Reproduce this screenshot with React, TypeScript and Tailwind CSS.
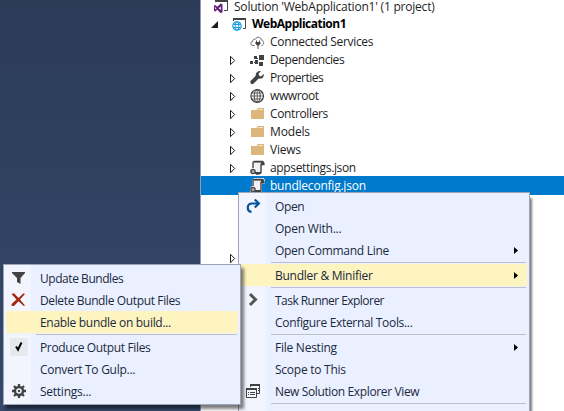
import React from "react";

type IconProps = { className?: string };

const svg = (children: React.ReactNode, w = 16, h = 16) => (
  <svg width={w} height={h} viewBox={`0 0 ${w} ${h}`} className="block shrink-0">
    {children}
  </svg>
);

const SolutionIcon = () =>
  svg(
    <>
      <path d="M1.500 3V.5h12v11H10" fill="none" stroke="#424242" />
      <path d="M1 0h13v3H1z" fill="#424242" />
      <path d="M0 6.500 1.300 6l2 1.800L6.700 4.500 8.500 5.300v8L6.700 14.200 3.300 10.800 1.300 12.500 0 12zM1.200 8v2.600L2.500 9.300zM4.800 9.300 6.800 11V7.600z" fill="#68217a" fillRule="evenodd" />
    </>,
  );

const ProjectIcon = () =>
  svg(
    <>
      <path d="M1.500 5V2.500h12v10H11" fill="none" stroke="#424242" />
      <path d="M1 2h13v2H1z" fill="#424242" />
      <circle cx="5" cy="10" r="5.200" fill="#fff" />
      <circle cx="5" cy="10" r="4.200" fill="none" stroke="#1ba1e2" strokeWidth="1.200" />
      <ellipse cx="5" cy="10" rx="1.900" ry="4.200" fill="none" stroke="#1ba1e2" />
      <path d="M1.400 8.500h7.200M1.400 11.500h7.200" stroke="#1ba1e2" />
    </>,
  );

const CloudIcon = () =>
  svg(
    <>
      <path d="M4.500 11.500H3C.2 11.200.1 7.700 2.700 7.300 2.700 5.500 4.200 4.700 5.500 5.200 6.600 2.300 11 2.500 11.300 6c3 .2 3.200 5 .2 5.500" fill="none" stroke="#666" />
      <path d="M6.500 6.500V9M9.500 6.500V9M8 11v4" stroke="#555" />
      <path d="M5.500 8h5v1.500L9 11.500H7L5.500 9.500z" fill="#424242" />
    </>,
  );

const DependenciesIcon = () =>
  svg(
    <path d="M9 3h5v5H9zM4 4h3v3H4zM0 9h3v3H0zM5 8h3v4H5zM9 10h4v4H9zM7 6h1v1H7zM4 10h1v1H4z" fill="#424242" />,
  );

const WrenchIcon = () =>
  svg(
    <path d="M13.700 4 11 6.400 9 5.400 8.600 3.400 11 1C8 .3 5 2.800 5.800 5.800L.8 10.800c-1.700 1.700 1 4.600 2.800 2.800L8.700 8.600c3.300.8 5.700-1.600 5-4.600z" fill="#424242" />,
  );

const GlobeIcon = () =>
  svg(
    <g fill="none" stroke="#424242">
      <circle cx="7.200" cy="8" r="6.300" strokeWidth="1.200" />
      <ellipse cx="7.200" cy="8" rx="3" ry="6.300" />
      <path d="M1 8h12.500M1.700 5h11M1.700 11h11M7.200 2v12" strokeWidth=".8" />
    </g>,
  );

const FolderIcon = () =>
  svg(
    <>
      <path d="M1 4h5.500l1-2H14v11H1z" fill="#dcb67a" />
      <path d="M8 3h5v1H7.500z" fill="#efe0c6" />
    </>,
  );

const JsonIcon = ({ className }: IconProps) =>
  svg(
    <g className={className}>
      <path d="M4 3h8v9.500H5z" fill="#f2f2f2" />
      <path d="M3 8V3.200C3 1.300 4.500 1.300 5 1.500h7.500c1.500.5 1.500 2 1.500 3h-3V12c0 2-2 2-3.500 2H6" fill="none" stroke="#424242" strokeWidth="1.400" />
      <path d="M4 1.500h8.500L14 4.500h-3V2.500H4zM5 12h6l-1 2H5z" fill="#424242" />
      <circle cx="3" cy="11.500" r="2.200" fill="#aaa" stroke="#424242" strokeWidth="1.200" />
    </g>,
  );

const SelectedJsonIcon = () =>
  svg(
    <>
      <path d="M2 8V2.500L4 0h9.500L15 2v3.500h-3V13l-2 2H2l-2-2v-3z" fill="#f2f2f2" />
      <path d="M3 8V3.200C3 1.300 4.500 1.300 5 1.500h7.500c1.500.5 1.500 2 1.500 3h-3V12c0 2-2 2-3.500 2H6" fill="none" stroke="#424242" strokeWidth="1.400" />
      <path d="M4 1.500h8.500L14 4.500h-3V2.500H4zM5 12h6l-1 2H5z" fill="#424242" />
      <circle cx="3" cy="11.500" r="2.200" fill="#aaa" stroke="#424242" strokeWidth="1.200" />
    </>,
  );

const OpenIcon = () =>
  svg(
    <g fill="none" stroke="#00539c" strokeWidth="2.200">
      <path d="M5.500 14C.2 13 .8 5.500 6 5.500h6.500" />
      <path d="M8.800 1.500 12.800 5.500 8.800 9.500" />
    </g>,
  );

const ChevronIcon = () =>
  svg(<path d="m4 2 5.500 5.500L4 13" fill="none" stroke="#555" strokeWidth="3" />);

const WindowsIcon = () =>
  svg(
    <>
      <path d="M4.500 4V1.500h9v9H11" fill="none" stroke="#424242" />
      <path d="M4 1h10v2H4z" fill="#424242" />
      <path d="M.5 5.500h10v9H.5z" fill="#f2f4fe" stroke="#424242" />
      <path d="M0 5h11v2H0zM2 9h1v1H2zM4 9h5v1H4zM2 11h1v1H2zM4 11h5v1H4zM12 5h1v1h-1zM12 7h1v1h-1z" fill="#424242" />
    </>,
  );

const FilterIcon = () => svg(<path d="M1 2h13v1L9.500 8v6L6 12V8L1 3z" fill="#424242" />);

const DeleteIcon = () =>
  svg(
    <path d="M.5 2 3 1.200 7.500 6 12.500 1.200 14 2 9 7.500 14 13.500 12.800 14 7.500 9.200 3 14 .5 13.800.6 12 5.500 7.500z" fill="#a1260d" />,
  );

const CheckIcon = () =>
  svg(<path d="m5 7.500 2 3.200L10.500 3.500" fill="none" stroke="#000" strokeWidth="2" />);

const GearIcon = () =>
  svg(
    <>
      <circle cx="8" cy="8" r="4" fill="none" stroke="#424242" strokeWidth="2.400" />
      <path d="M8 1v3M8 12v3M1 8h3M12 8h3M3 3l2 2M11 11l2 2M13 3l-2 2M5 11l-2 2" stroke="#424242" strokeWidth="2.300" />
      <circle cx="8" cy="8" r="1.200" fill="#424242" />
    </>,
  );

const Collapsed = () =>
  svg(<path d="M1.500 1.300v8.400L5.700 5.500z" fill="#fff" stroke="#1e1e1e" />, 8, 11);

const Expanded = () => svg(<path d="M7 1v7H0z" fill="#1e1e1e" />, 8, 9);

type Row = {
  label: string;
  icon: React.ReactNode;
  arrow?: boolean;
  spacing: string;
};

const files: Row[] = [
  { label: "Connected Services", icon: <CloudIcon />, spacing: "tracking-[-0.32px]" },
  { label: "Dependencies", icon: <DependenciesIcon />, arrow: true, spacing: "tracking-[-0.45px]" },
  { label: "Properties", icon: <WrenchIcon />, arrow: true, spacing: "tracking-[-0.48px]" },
  { label: "wwwroot", icon: <GlobeIcon />, arrow: true, spacing: "tracking-[-0.4px]" },
  { label: "Controllers", icon: <FolderIcon />, arrow: true, spacing: "tracking-[-0.37px]" },
  { label: "Models", icon: <FolderIcon />, arrow: true, spacing: "tracking-[-0.15px]" },
  { label: "Views", icon: <FolderIcon />, arrow: true, spacing: "tracking-[-0.25px]" },
  { label: "appsettings.json", icon: <JsonIcon />, arrow: true, spacing: "tracking-[-0.35px]" },
];

function SolutionTree() {
  return (
    <div className="flex-1 bg-white text-[#1e1e1e]">
      <div className="flex h-[15px] items-start pl-[13px]">
        <span className="-mt-px"><SolutionIcon /></span>
        <span className="ml-1 leading-[13px] tracking-[-0.21px]">Solution 'WebApplication1' (1 project)</span>
      </div>
      <div className="flex h-[18px] items-center pl-[10px]">
        <Expanded />
        <span className="ml-[13px]"><ProjectIcon /></span>
        <span className="ml-1 font-bold tracking-[-0.5px] text-black">WebApplication1</span>
      </div>
      {files.map((f) => (
        <div key={f.label} className="flex h-[18px] items-center pl-[28px]">
          <span className="w-[21px]">{f.arrow && <Collapsed />}</span>
          {f.icon}
          <span className={`ml-1 ${f.spacing}`}>{f.label}</span>
        </div>
      ))}
      <div className="-mt-px flex h-[19px] items-center bg-[#007acc] pl-[49px] pt-px text-white">
        <SelectedJsonIcon />
        <span className="ml-1 tracking-[-0.22px]">bundleconfig.json</span>
      </div>
      <div className="mt-[54px] flex h-[18px] items-center pl-[28px]">
        <Collapsed />
      </div>
    </div>
  );
}

type Entry =
  | "separator"
  | {
      label: string;
      icon?: React.ReactNode;
      submenu?: boolean;
      active?: boolean;
      checked?: boolean;
      spacing: string;
    };

const mainMenu: Entry[] = [
  { label: "Open", icon: <OpenIcon />, spacing: "tracking-[-0.35px]" },
  { label: "Open With...", spacing: "tracking-[-0.22px]" },
  { label: "Open Command Line", submenu: true, spacing: "tracking-[-0.28px]" },
  "separator",
  { label: "Bundler & Minifier", submenu: true, active: true, spacing: "tracking-[-0.27px]" },
  "separator",
  { label: "Task Runner Explorer", icon: <ChevronIcon />, spacing: "tracking-[-0.54px]" },
  { label: "Configure External Tools...", spacing: "tracking-[-0.32px]" },
  "separator",
  { label: "File Nesting", submenu: true, spacing: "tracking-[-0.25px]" },
  { label: "Scope to This", spacing: "tracking-[-0.25px]" },
  { label: "New Solution Explorer View", icon: <WindowsIcon />, spacing: "tracking-[-0.37px]" },
  "separator",
];

const bundlerMenu: Entry[] = [
  { label: "Update Bundles", icon: <FilterIcon />, spacing: "tracking-[-0.45px]" },
  { label: "Delete Bundle Output Files", icon: <DeleteIcon />, spacing: "tracking-[-0.37px]" },
  { label: "Enable bundle on build...", active: true, spacing: "tracking-[-0.3px]" },
  "separator",
  { label: "Produce Output Files", icon: <CheckIcon />, checked: true, spacing: "tracking-[-0.35px]" },
  { label: "Convert To Gulp...", spacing: "tracking-[-0.27px]" },
  { label: "Settings...", icon: <GearIcon />, spacing: "tracking-[-0.25px]" },
];

function Menu({ entries, className }: { entries: Entry[]; className: string }) {
  return (
    <div
      className={`absolute border border-[#9ba7b7] bg-[linear-gradient(to_right,#f2f4fe_27px,#eaf0ff_27px)] px-0.5 py-0.5 text-[#1b293e] ${className}`}
    >
      {entries.map((e, i) =>
        e === "separator" ? (
          <div key={i} className="h-[3px] pl-[30px] pr-px pt-px">
            <div className="h-px bg-[#bec3cb]" />
          </div>
        ) : (
          <div
            key={i}
            className={`flex h-[22px] items-center ${e.active ? "bg-[#fdf4bf]" : ""}`}
          >
            <span
              className={`ml-1 flex h-[18px] w-[18px] items-center justify-center ${e.checked ? "bg-[#e7eaed]" : ""}`}
            >
              {e.icon}
            </span>
            <span className={`ml-3 whitespace-nowrap pt-0.5 ${e.spacing}`}>{e.label}</span>
            {e.submenu && (
              <svg width="4" height="7" viewBox="0 0 4 7" className="ml-auto mr-[9px]">
                <path d="M0 0v7l4-3.500z" fill="#000" />
              </svg>
            )}
          </div>
        ),
      )}
    </div>
  );
}

export default function App() {
  return (
    <div className="relative flex h-[411px] w-[564px] overflow-hidden bg-white font-['Open_Sans','Noto_Sans',sans-serif] text-[12px] leading-[18px]">
      <div className="w-[201px] border-r border-[#8e9bbc] bg-linear-to-b from-[#2b3b58] to-[#36496b]" />
      <SolutionTree />
      <Menu
        entries={mainMenu}
        className="left-[238px] top-[192px] h-[230px] w-[292px] shadow-[2px_6px_2px_rgba(0,0,0,0.5)]"
      />
      <Menu
        entries={bundlerMenu}
        className="left-[3px] top-[264px] h-[141px] w-[238px] shadow-[3px_4px_3px_rgba(0,0,0,0.5)]"
      />
    </div>
  );
}
